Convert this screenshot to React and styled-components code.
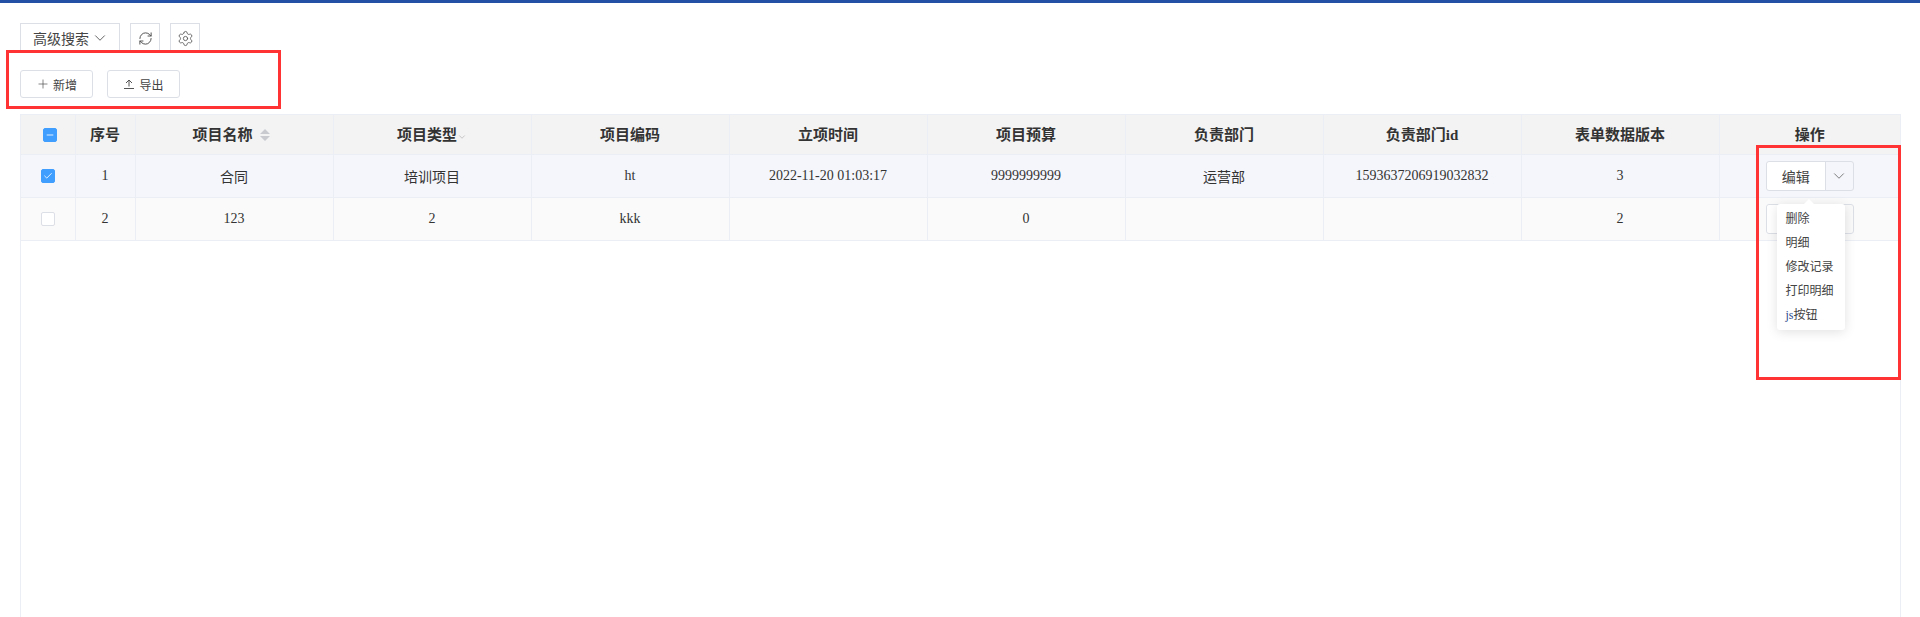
import React from 'react';
import styled, { createGlobalStyle } from 'styled-components';
import { ChevronDown, RefreshCw, Settings, Plus, Check, Minus } from 'lucide-react';

const Global = createGlobalStyle`
  html, body { margin: 0; padding: 0; background: #fff; }
  body { font-family: "Liberation Serif", "Noto Sans CJK SC", serif; color: #333; overflow: hidden; }
`;
const SANS = `"Liberation Sans", "Noto Sans CJK SC", sans-serif`;

const Page = styled.div`
  position: relative; width: 1920px; height: 617px; overflow: hidden; box-sizing: border-box;
  border-top: 3px solid #2350a5; padding: 20px 20px 0; display: flex; flex-direction: column;
`;
const Toolbar = styled.div`display: flex; gap: 10px; height: 30px;`;
const SearchButton = styled.button`
  width: 100px; height: 30px; box-sizing: border-box; border: 1px solid #dcdfe6; background: #fff; padding: 0 0 0 12px;
  display: flex; align-items: center; gap: 2px; font: 14px ${SANS}; color: #444;
`;
const IconButton = styled.button`
  width: 30px; height: 30px; box-sizing: border-box; border: 1px solid #dcdfe6; background: #fff; padding: 0;
  display: flex; align-items: center; justify-content: center; color: #555;
`;
const Actions = styled.div`display: flex; gap: 14px; margin-top: 17px; height: 28px;`;
const ActionButton = styled.button`
  width: 73px; height: 28px; box-sizing: border-box; border: 1px solid #dcdfe6; border-radius: 3px; background: #fff; padding: 0;
  display: flex; align-items: center; justify-content: center; gap: ${p => p.$gap}px; font: 12px ${SANS}; color: #444;
`;
const TableArea = styled.div`
  margin-top: 16px; flex: 1; box-sizing: border-box; border: 1px solid #ebeef5; border-bottom: 0; width: 1881px;
`;
const Table = styled.table`
  border-collapse: collapse; table-layout: fixed; width: 1879px; font-size: 14px;
`;
const Head = styled.th`
  height: 39px; padding: 0 0 2px; box-sizing: border-box; background: #f3f3f3; border: 1px solid #ebeef5; border-top: 0;
  font-size: 15px; font-weight: 700; color: #333; text-align: center;
  &:first-child { border-left: 0; padding: 0; } &:last-child { border-right: 0; }
`;
const HeadInner = styled.span`position: relative; left: ${p => p.$left}px;`;
const Row = styled.tr`background: ${p => p.$bg};`;
const Cell = styled.td`
  position: relative; height: 42px; padding: 0; border: 1px solid #ebeef5; text-align: center; color: #333;
  &:first-child { border-left: 0; } &:last-child { border-right: 0; }
`;
const Box = styled.span`
  display: inline-flex; align-items: center; justify-content: center; vertical-align: middle; position: relative; left: ${p => p.$left}px;
  width: 14px; height: 14px; box-sizing: border-box; border-radius: 2px; color: #fff;
  background: ${p => (p.$on ? '#409eff' : '#fff')}; border: 1px solid ${p => (p.$on ? '#409eff' : '#dcdfe6')};
`;
const SortArrows = styled.svg`margin-left: 7px; vertical-align: -1px;`;
const Split = styled.div`
  display: inline-flex; width: 88px; height: 30px; box-sizing: border-box; vertical-align: middle;
  border: 1px solid #dcdfe6; border-radius: 3px; font: 14px ${SANS}; color: #444;
`;
const SplitMain = styled.div`
  width: 58px; background: #fff; border-right: 1px solid #dcdfe6; display: flex; align-items: center; justify-content: center; border-radius: 3px 0 0 3px;
`;
const SplitArrow = styled.div`flex: 1; display: flex; align-items: center; justify-content: center; color: #555;`;
const Menu = styled.div`
  position: absolute; z-index: 3; left: 57px; top: 49px; width: 68px; height: 126px; box-sizing: border-box; padding: 3px 0 0 9px;
  background: #fff; border-radius: 3px; box-shadow: 0 2px 12px rgba(0,0,0,.12); text-align: left; font: 12px/24px ${SANS}; color: #444;
  &::before { content: ""; position: absolute; left: 27px; top: -5px; border: 5px solid transparent; border-top: 0; border-bottom-color: #fff; }
`;
const MenuItem = styled.div`height: 24px; white-space: nowrap;`;
const JsText = styled.span`font-family: "Liberation Serif", serif; color: #2d4a8a;`;
const RedBox = styled.div`
  position: absolute; box-sizing: border-box; border: 3px solid #ff3333; z-index: 5;
  left: ${p => p.$x}px; top: ${p => p.$y}px; width: ${p => p.$w}px; height: ${p => p.$h}px;
`;

const widths = [54, 60, 198, 198, 198, 198, 198, 198, 198, 198, 181];
const heads = ['序号', '项目名称', '项目类型', '项目编码', '立项时间', '项目预算', '负责部门', '负责部门id', '表单数据版本', '操作'];
const rows = [
  { bg: '#f4f6fb', on: true, cells: ['1', '合同', '培训项目', 'ht', '2022-11-20 01:03:17', '9999999999', '运营部', '1593637206919032832', '3'] },
  { bg: '#fafafa', on: false, cells: ['2', '123', '2', 'kkk', '', '0', '', '', '2'] },
];

const Sort = () => (
  <SortArrows width="10" height="12" viewBox="0 0 10 12">
    <path d="M5 0 L10 5 H0 Z M0 7 H10 L5 12 Z" fill="#c8cad0" />
  </SortArrows>
);

const UploadLine = () => (
  <svg width="12" height="12" viewBox="0 0 12 12" fill="none" stroke="#555" strokeWidth="1">
    <path d="M1 10.5 H11 M6 8.5 V2 M3 5 L6 2 L9 5" />
  </svg>
);

const ActionSplit = () => (
  <Split>
    <SplitMain>编辑</SplitMain>
    <SplitArrow><ChevronDown size={18} strokeWidth={1} /></SplitArrow>
  </Split>
);

export default function App() {
  return (
    <Page>
      <Global />
      <Toolbar>
        <SearchButton>高级搜索<ChevronDown size={18} strokeWidth={1.1} /></SearchButton>
        <IconButton><RefreshCw size={15} strokeWidth={1.6} /></IconButton>
        <IconButton><Settings size={17} strokeWidth={1.2} /></IconButton>
      </Toolbar>
      <Actions>
        <ActionButton $gap={3}><Plus size={14} strokeWidth={1.1} />新增</ActionButton>
        <ActionButton $gap={4}><UploadLine />导出</ActionButton>
      </Actions>
      <TableArea>
        <Table>
          <colgroup>{widths.map((w, i) => <col key={i} width={w} />)}</colgroup>
          <thead>
            <tr>
              <Head><Box $on $left={2}><Minus size={10} strokeWidth={2} /></Box></Head>
              {heads.map(h => (
                <Head key={h}>
                  <HeadInner $left={h === '项目名称' ? -3 : 0}>
                    {h}
                    {h === '项目名称' && <Sort />}
                    {h === '项目类型' && <ChevronDown size={10} strokeWidth={1.5} color="#aaa" style={{ verticalAlign: -2 }} />}
                  </HeadInner>
                </Head>
              ))}
            </tr>
          </thead>
          <tbody>
            {rows.map((r, i) => (
              <Row key={i} $bg={r.bg}>
                <Cell><Box $on={r.on} $left={0}>{r.on && <Check size={10} strokeWidth={2} />}</Box></Cell>
                {r.cells.map((c, j) => <Cell key={j}>{c}</Cell>)}
                <Cell>
                  <ActionSplit />
                  {i === 0 && (
                    <Menu>
                      <MenuItem>删除</MenuItem>
                      <MenuItem>明细</MenuItem>
                      <MenuItem>修改记录</MenuItem>
                      <MenuItem>打印明细</MenuItem>
                      <MenuItem><JsText>js</JsText>按钮</MenuItem>
                    </Menu>
                  )}
                </Cell>
              </Row>
            ))}
          </tbody>
        </Table>
      </TableArea>
      <RedBox $x={6} $y={47} $w={275} $h={59} />
      <RedBox $x={1756} $y={142} $w={145} $h={235} />
    </Page>
  );
}
